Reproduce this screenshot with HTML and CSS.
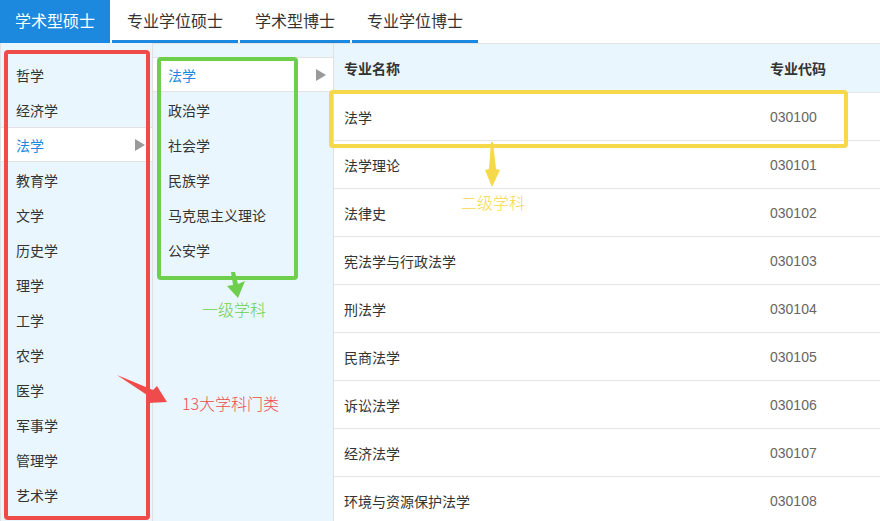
FILE: index.html
```html
<!DOCTYPE html>
<html lang="zh-CN">
<head>
  <meta charset="UTF-8" />
  <title>学科专业目录</title>
  <link rel="stylesheet" href="styles.css">
</head>
<body>

  <div class="abas">
    <div class="aba ativa">学术型硕士</div>
    <div class="aba">专业学位硕士</div>
    <div class="aba">学术型博士</div>
    <div class="aba">专业学位博士</div>
  </div>

  <div class="painel">
    <!-- 门类 -->
    <ul class="lista categorias">
      <li>哲学</li>
      <li>经济学</li>
      <li class="ativo">法学<span class="seta"></span></li>
      <li>教育学</li>
      <li>文学</li>
      <li>历史学</li>
      <li>理学</li>
      <li>工学</li>
      <li>农学</li>
      <li>医学</li>
      <li>军事学</li>
      <li>管理学</li>
      <li>艺术学</li>
    </ul>

    <!-- 一级学科 -->
    <ul class="lista subs">
      <li class="ativo">法学<span class="seta"></span></li>
      <li>政治学</li>
      <li>社会学</li>
      <li>民族学</li>
      <li>马克思主义理论</li>
      <li>公安学</li>
    </ul>

    <!-- 二级学科 -->
    <div class="tabela">
      <div class="linha cabecalho"><span>专业名称</span><span>专业代码</span></div>
      <div class="linha"><span>法学</span><span class="codigo">030100</span></div>
      <div class="linha"><span>法学理论</span><span class="codigo">030101</span></div>
      <div class="linha"><span>法律史</span><span class="codigo">030102</span></div>
      <div class="linha"><span>宪法学与行政法学</span><span class="codigo">030103</span></div>
      <div class="linha"><span>刑法学</span><span class="codigo">030104</span></div>
      <div class="linha"><span>民商法学</span><span class="codigo">030105</span></div>
      <div class="linha"><span>诉讼法学</span><span class="codigo">030106</span></div>
      <div class="linha"><span>经济法学</span><span class="codigo">030107</span></div>
      <div class="linha"><span>环境与资源保护法学</span><span class="codigo">030108</span></div>
    </div>
  </div>

  <!-- marcações por cima -->
  <svg class="marcas" width="880" height="521" viewBox="0 0 880 521">
    <rect x="6" y="52" width="142" height="466" rx="2" fill="none" stroke="#ef4b4b" stroke-width="4" />
    <rect x="159" y="59" width="137" height="219" rx="2" fill="none" stroke="#6dcf4b" stroke-width="4" />
    <rect x="331" y="92" width="515" height="54" rx="2" fill="none" stroke="#f6d84b" stroke-width="4" />

    <polygon points="117,375 153,390 157,386 167,402 148,403 150,397" fill="#ef4b4b" />
    <polygon points="231,272 235,272 238,284 245,281 238,298 227,286 233,285" fill="#6dcf4b" />
    <polygon points="491,142 493,142 496,169 500,170 492,187 485,170 489,169" fill="#f6d84b" />

    <text x="182" y="410" class="nota" fill="#ef4b4b">13大学科门类</text>
    <text x="202" y="316" class="nota" fill="#6dcf4b">一级学科</text>
    <text x="461" y="209" class="nota" fill="#f6d84b">二级学科</text>
  </svg>

</body>
</html>
```

FILE: styles.css
```css
body {
  font-family: "Noto Sans CJK SC", "Liberation Sans", sans-serif;
  margin: 0;
  padding: 0;
  background: #fff;
  color: #333;
  position: relative;
  width: 880px;
  height: 521px;
  overflow: hidden;
}

.abas {
  display: flex;
  height: 43px;
}

.aba {
  padding: 0 15px;
  margin-right: 2px;
  font-size: 16px;
  line-height: 40px;
  color: #333;
  border-bottom: 3px solid #1c88de;
}

.aba.ativa {
  background: #1c88de;
  color: #fff;
}

.painel {
  display: grid;
  grid-template-columns: 152px 181px 1fr;
  height: 478px;
  border-left: 1px solid #e2e2e2;
  box-sizing: border-box;
}

.lista {
  list-style: none;
  margin: 0;
  padding: 14px 0 0 0;
  background: #eaf6fd;
  border-right: 1px solid #e0e0e0;
}

.subs {
  border-top: 1px solid #e3e3e3;
  padding-top: 13px;
}

.lista li {
  height: 35px;
  box-sizing: border-box;
  display: flex;
  align-items: center;
  justify-content: space-between;
  padding: 0 7px 0 15px;
  font-size: 14px;
  color: #333;
}

.lista li.ativo {
  background: #fff;
  color: #1c88de;
  border-top: 1px solid #e3e3e3;
  border-bottom: 1px solid #e3e3e3;
}

.seta {
  width: 0;
  height: 0;
  border-left: 10px solid #9a9a9a;
  border-top: 6px solid transparent;
  border-bottom: 6px solid transparent;
}

.tabela {
  border-top: 1px solid #e3e3e3;
}

.linha {
  display: grid;
  grid-template-columns: 426px 1fr;
  height: 48px;
  box-sizing: border-box;
  align-items: center;
  border-bottom: 1px solid #e6e6e6;
  font-size: 14px;
}

.linha span {
  padding-left: 10px;
}

.cabecalho {
  background: #eaf6fd;
  height: 49px;
  font-weight: bold;
  color: #333;
}

.codigo {
  font-family: "Liberation Sans", sans-serif;
  color: #666;
}

.marcas {
  position: absolute;
  top: 0;
  left: 0;
  pointer-events: none;
}

.nota {
  font-family: "Noto Sans CJK SC", sans-serif;
  font-size: 16px;
  font-weight: 300;
}
```
